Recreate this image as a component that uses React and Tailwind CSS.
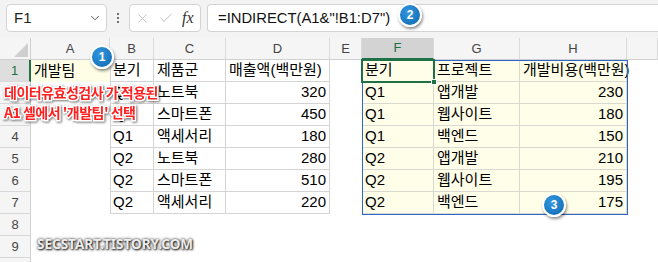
import React from "react";
import { ChevronDown, X, Check } from "lucide-react";

const COLS = ["A", "B", "C", "D", "E", "F", "G", "H", ""];

const left = [
  ["분기", "제품군", "매출액(백만원)"],
  ["Q1", "노트북", "320"],
  ["Q1", "스마트폰", "450"],
  ["Q1", "액세서리", "180"],
  ["Q2", "노트북", "280"],
  ["Q2", "스마트폰", "510"],
  ["Q2", "액세서리", "220"],
];

const right = [
  ["분기", "프로젝트", "개발비용(백만원)"],
  ["Q1", "앱개발", "230"],
  ["Q1", "웹사이트", "180"],
  ["Q1", "백엔드", "150"],
  ["Q2", "앱개발", "210"],
  ["Q2", "웹사이트", "195"],
  ["Q2", "백엔드", "175"],
];

const Badge = ({ n, className }) => (
  <div
    className={`absolute w-[24px] h-[24px] rounded-full border-2 border-white bg-[radial-gradient(circle_at_40%_35%,#3597e0,#0a66ad)] shadow-[1px_2px_3px_rgba(0,0,0,0.45)] flex items-center justify-center text-white text-[12px] font-bold font-['Liberation_Sans',sans-serif] ${className}`}
  >
    {n}
  </div>
);

const Cell = ({ children, className = "" }) => (
  <div
    className={`h-[22px] flex items-center whitespace-nowrap overflow-visible text-[15px] text-black ${className}`}
  >
    {children}
  </div>
);

const App = () => {
  const rows = [1, 2, 3, 4, 5, 6, 7, 8, 9, 10];

  return (
    <div className="relative w-[658px] h-[262px] overflow-hidden bg-white font-['Liberation_Sans','Noto_Sans_CJK_KR',sans-serif]">
      {/* toolbar */}
      <div className="h-[38px] bg-[#f3f3f3] flex items-start pt-[4px] pl-[6px] gap-[6px]">
        <div className="w-[101px] h-[28px] bg-white border border-[#d3d3d3] rounded-[4px] flex items-center justify-between pl-[7px] pr-[4px]">
          <span className="text-[15px] text-[#222]">F1</span>
          <ChevronDown size={14} strokeWidth={1.6} className="text-[#555]" />
        </div>
        <div className="w-[10px] h-[28px] flex flex-col items-center justify-center gap-[2px]">
          <span className="w-[2px] h-[2px] bg-[#444] rounded-full" />
          <span className="w-[2px] h-[2px] bg-[#444] rounded-full" />
          <span className="w-[2px] h-[2px] bg-[#444] rounded-full" />
        </div>
        <div className="w-[72px] h-[28px] bg-white border border-[#d3d3d3] rounded-[4px] flex items-center pl-[5px] gap-[8px]">
          <X size={15} strokeWidth={1.2} className="text-[#b0b0b0]" />
          <Check size={16} strokeWidth={1.2} className="text-[#b0b0b0]" />
          <span className="text-[16px] italic font-['Liberation_Serif',serif] text-[#333]">fx</span>
        </div>
        <div className="flex-1 h-[28px] bg-white border border-[#d3d3d3] border-r-0 rounded-l-[4px] flex items-center pl-[10px]">
          <span className="text-[14.8px] text-[#111]">=INDIRECT(A1&amp;"!B1:D7")</span>
        </div>
      </div>

      {/* sheet */}
      <div className="grid grid-cols-[31px_79px_44px_72px_104px_32px_72px_86px_107px_1fr] grid-rows-[22px_22px_22px_22px_22px_22px_22px_22px_22px_22px_22px]">
        {/* corner */}
        <div className="bg-[#f5f5f5] border-r border-b border-[#d0d0d0] flex items-end justify-end pr-[2px] pb-[2px]">
          <svg width="14" height="14" viewBox="0 0 14 14">
            <polygon points="14,0 14,14 0,14" fill="#cfcfcf" />
          </svg>
        </div>
        {COLS.map((c) => (
          <div
            key={c || "x"}
            className={`flex items-center justify-center text-[13px] border-r border-[#dadada] ${
              c === "F"
                ? "bg-[#d3d3d3] text-[#1e6f45] border-b-2 border-b-[#1e7145]"
                : "bg-[#f5f5f5] text-[#444] border-b border-b-[#d0d0d0]"
            }`}
          >
            {c}
          </div>
        ))}

        {rows.map((r) => {
          const li = r <= 7 ? left[r - 1] : null;
          const ri = r <= 7 ? right[r - 1] : null;
          const tb = "border-r border-b border-[#d4d4d4]";
          const yb = "border-r border-b border-[#d9d9cf] bg-[#fffee8]";
          return (
            <React.Fragment key={r}>
              <div
                className={`h-[22px] flex items-center justify-center text-[13px] border-b border-[#d8d8d8] ${
                  r === 1
                    ? "bg-[#dedede] text-[#1e6f45] border-r-2 border-r-[#1e7145]"
                    : "bg-[#f5f5f5] text-[#444] border-r border-r-[#d0d0d0]"
                }`}
              >
                {r}
              </div>
              {/* A */}
              <Cell className={r === 1 ? "bg-[#fefee6] pl-[3px]" : ""}>
                {r === 1 ? "개발팀" : ""}
              </Cell>
              {/* B C D */}
              {li ? (
                <>
                  <Cell className={`${tb} border-l pl-[2px]`}>{li[0]}</Cell>
                  <Cell className={`${tb} pl-[3px]`}>{li[1]}</Cell>
                  <Cell className={`${tb} ${r === 1 ? "pl-[3px]" : "justify-end pr-[3px]"}`}>
                    {li[2]}
                  </Cell>
                </>
              ) : (
                <>
                  <Cell />
                  <Cell />
                  <Cell />
                </>
              )}
              {/* E */}
              <Cell />
              {/* F G H */}
              {ri ? (
                <>
                  <Cell className={`${yb} pl-[3px]`}>{ri[0]}</Cell>
                  <Cell className={`${yb} pl-[3px]`}>{ri[1]}</Cell>
                  <Cell className={`${yb} ${r === 1 ? "pl-[3px]" : "justify-end pr-[3px]"}`}>
                    {ri[2]}
                  </Cell>
                </>
              ) : (
                <>
                  <Cell />
                  <Cell />
                  <Cell />
                </>
              )}
              <Cell />
            </React.Fragment>
          );
        })}
      </div>

      {/* range outline F1:H7 */}
      <div className="absolute left-[362px] top-[60px] w-[266px] h-[155px] border border-[#2f66cc] pointer-events-none" />
      {/* active cell F1 */}
      <div className="absolute left-[361px] top-[59px] w-[74px] h-[24px] border-2 border-[#1e7145] pointer-events-none">
        <div className="absolute -right-[4px] -bottom-[4px] w-[6px] h-[6px] bg-[#1e7145] border border-white" />
      </div>

      {/* annotation */}
      <div className="absolute left-[4px] top-[82px] flex flex-col leading-[20px] text-[14px] font-bold tracking-[-0.5px] text-[#ff1f1f] font-['Noto_Sans_CJK_KR',sans-serif] [-webkit-text-stroke:3px_white] [paint-order:stroke_fill] [filter:drop-shadow(1px_1px_1px_rgba(0,0,0,0.55))]">
        <span>데이터유효성검사 가 적용된</span>
        <span>A1 셀에서 '개발팀' 선택</span>
      </div>

      {/* watermark */}
      <div className="absolute left-[37px] top-[234px] text-[13.5px] font-bold text-[#ececec] font-['Noto_Sans',sans-serif] [text-shadow:0_0_3px_rgba(0,0,0,0.9),1px_1px_2px_rgba(0,0,0,0.8)]">
        SECSTART.TISTORY.COM
      </div>

      <Badge n="1" className="left-[90px] top-[45px]" />
      <Badge n="2" className="left-[398px] top-[3px]" />
      <Badge n="3" className="left-[542px] top-[193px]" />
    </div>
  );
};

export default App;
